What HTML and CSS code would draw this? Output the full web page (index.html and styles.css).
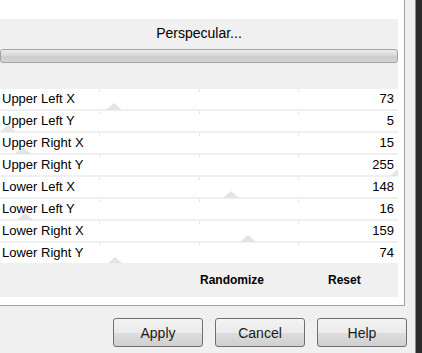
FILE: index.html
```html
<!DOCTYPE html>
<html lang="en">

<head>
    <meta charset="UTF-8">
    <title>Perspecular</title>
    <link rel="stylesheet" href="styles.css">
</head>

<body>
    <div class="window">
        <div class="main">
            <div class="sheet">
                <div class="panel">
                    <div class="title">Perspecular...</div>
                    <div class="slider"></div>
                    <div class="rows">
                        <div class="row"><span>Upper Left X</span><span>73</span><i class="mark" style="left: 28.6%"></i></div>
                        <div class="row"><span>Upper Left Y</span><span>5</span><i class="mark" style="left: 2%"></i></div>
                        <div class="row"><span>Upper Right X</span><span>15</span><i class="mark" style="left: 5.9%"></i></div>
                        <div class="row"><span>Upper Right Y</span><span>255</span><i class="mark" style="left: 100%"></i></div>
                        <div class="row"><span>Lower Left X</span><span>148</span><i class="mark" style="left: 58%"></i></div>
                        <div class="row"><span>Lower Left Y</span><span>16</span><i class="mark" style="left: 6.3%"></i></div>
                        <div class="row"><span>Lower Right X</span><span>159</span><i class="mark" style="left: 62.4%"></i></div>
                        <div class="row"><span>Lower Right Y</span><span>74</span><i class="mark" style="left: 29%"></i></div>
                    </div>
                    <div class="tools">
                        <span>Randomize</span>
                        <span>Reset</span>
                    </div>
                </div>
            </div>
            <div class="buttons">
                <button class="btn">Apply</button>
                <button class="btn">Cancel</button>
                <button class="btn">Help</button>
            </div>
        </div>
        <div class="edge"></div>
    </div>
</body>

</html>
```

FILE: styles.css
```css
html,
body {
    margin: 0;
    background: #f0f0f0;
    font-family: "Liberation Sans", Arial, sans-serif;
    color: #000;
    overflow: hidden;
}

.window {
    display: flex;
    width: 422px;
    height: 353px;
}

.main {
    width: 415px;
}

.sheet {
    width: 398px;
    height: 286px;
    padding: 19px 6px 0 0;
    background: #fff;
    border-right: 1px solid #a0a0a0;
    border-bottom: 1px solid #a0a0a0;
}

.panel {
    height: 278px;
    background: #f0f0f0;
}

.title {
    height: 28px;
    line-height: 28px;
    text-align: center;
    font-size: 14px;
}

.slider {
    height: 12px;
    margin-top: 2px;
    border: 1px solid #a3a3a3;
    border-radius: 3px;
    background: linear-gradient(#ececec, #d8d8d8 45%, #cdcdcd 55%, #d4d4d4);
}

.rows {
    display: flex;
    flex-direction: column;
    gap: 2px;
    margin-top: 26px;
    overflow: hidden;
}

.row {
    position: relative;
    display: flex;
    justify-content: space-between;
    flex-shrink: 0;
    height: 20px;
    line-height: 20px;
    padding: 0 4px 0 2px;
    font-size: 13px;
    background-color: #fff;
    background-image:
        linear-gradient(#e6e6e6, #e6e6e6),
        linear-gradient(#e6e6e6, #e6e6e6),
        linear-gradient(#e6e6e6, #e6e6e6);
    background-size: 1px 3px;
    background-position: 25% 0, 50% 0, 75% 0;
    background-repeat: no-repeat;
}

.row span {
    position: relative;
    z-index: 1;
}

.mark {
    position: absolute;
    bottom: -1px;
    width: 0;
    height: 0;
    border-left: 8px solid transparent;
    border-right: 8px solid transparent;
    border-bottom: 7px solid #e4e4e4;
    transform: translateX(-50%);
}

.tools {
    display: flex;
    gap: 64px;
    height: 34px;
    line-height: 34px;
    padding-left: 200px;
    font-size: 12px;
    font-weight: bold;
}

.buttons {
    display: flex;
    gap: 12px;
    padding: 12px 0 0 113px;
}

.btn {
    width: 90px;
    height: 29px;
    padding: 0;
    border: 1px solid #707070;
    border-radius: 3px;
    background: linear-gradient(#f2f2f2, #ebebeb 50%, #dddddd 51%, #cfcfcf);
    font-family: "Liberation Sans", Arial, sans-serif;
    font-size: 14px;
    color: #1a1a1a;
}

.edge {
    width: 6px;
    border-left: 1px solid #8c8c8c;
    background: #2c2c2c;
}
```
